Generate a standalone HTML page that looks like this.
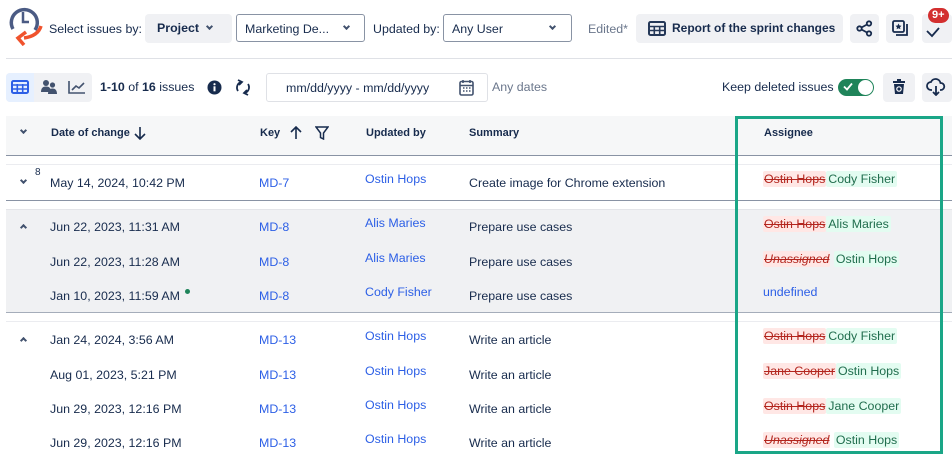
<!DOCTYPE html>
<html><head><meta charset="utf-8"><style>
*{box-sizing:border-box;margin:0;padding:0}
body{width:952px;height:456px;overflow:hidden;background:#fff;font-family:"Liberation Sans",Arial,sans-serif;color:#172b4d;position:relative;font-size:12.4px}
.a{position:absolute;white-space:nowrap}
.btn{position:absolute;background:#f0f1f4;border-radius:4px}
.sel{position:absolute;border:1px solid #8993a4;border-radius:3px;background:#fff;font-size:12.4px;padding:7px 8px}
.chev{position:absolute;width:6px;height:6px;border-right:2px solid #42526e;border-bottom:2px solid #42526e;transform:rotate(45deg)}
.up{transform:rotate(-135deg)}
.th{position:absolute;font-size:11px;font-weight:bold;color:#172b4d;top:127px}
.t{position:absolute;font-size:12.4px;color:#172b4d;white-space:nowrap}
.k{color:#2c5fe6}
.u{color:#2c5fe6}
.del{background:#ffe7e5;color:#b3261e;text-decoration:line-through;padding:1px 1px;border-radius:2px}
.ins{background:#e3fcf1;color:#216e4e;padding:1px 2px;border-radius:2px}
.it{font-style:italic}
</style></head><body>
<svg class="a" style="left:6px;top:6px" width="38" height="40" viewBox="0 0 38 40">
<path d="M7 23 A13 13 0 1 1 29 24" fill="none" stroke="#4b5b84" stroke-width="3.5"/>
<path d="M17 6v10h6" fill="none" stroke="#4b5b84" stroke-width="2.5"/>
<path d="M35 20 Q32 30 18 32" fill="none" stroke="#f0532d" stroke-width="3.5"/>
<path d="M20 26 L12 32 L18 39" fill="none" stroke="#f0532d" stroke-width="3.5"/>
</svg>
<div class="a" style="left:49px;top:22px">Select issues by:</div>
<div class="btn" style="left:145px;top:14px;width:87px;height:29px"></div>
<div class="a" style="left:157px;top:21px;font-weight:bold">Project</div>
<div class="chev" style="left:207px;top:24px;width:5px;height:5px"></div>
<div class="sel" style="left:236px;top:14px;width:129px;height:28px">Marketing De...</div>
<div class="chev" style="left:344px;top:24px;width:5px;height:5px"></div>
<div class="a" style="left:373px;top:22px">Updated by:</div>
<div class="sel" style="left:443px;top:14px;width:129px;height:28px">Any User</div>
<div class="chev" style="left:550px;top:24px;width:5px;height:5px"></div>
<div class="a" style="left:588px;top:22px;color:#6b778c">Edited*</div>
<div class="btn" style="left:636px;top:14px;width:207px;height:29px"></div>
<svg class="a" style="left:648px;top:21px" width="18" height="15" viewBox="0 0 18 15"><rect x="1" y="1" width="16" height="13" rx="1.5" fill="none" stroke="#253858" stroke-width="2"/><path d="M1 5.5h16M1 9.5h16M6.3 5v9M11.7 5v9" stroke="#253858" stroke-width="1.6"/></svg>
<div class="a" style="left:672px;top:21px;font-weight:bold;font-size:12px">Report of the sprint changes</div>
<div class="btn" style="left:850px;top:14px;width:29px;height:29px"></div>
<svg class="a" style="left:856px;top:20px" width="17" height="17" viewBox="0 0 17 17"><circle cx="13" cy="3.5" r="2.2" fill="none" stroke="#172b4d" stroke-width="1.8"/><circle cx="13" cy="13.5" r="2.2" fill="none" stroke="#172b4d" stroke-width="1.8"/><circle cx="3.5" cy="8.5" r="2.2" fill="none" stroke="#172b4d" stroke-width="1.8"/><path d="M5.5 7.5L11 4.5M5.5 9.5L11 12.5" stroke="#172b4d" stroke-width="1.8"/></svg>
<div class="btn" style="left:886px;top:14px;width:28px;height:29px"></div>
<svg class="a" style="left:892px;top:20px" width="17" height="17" viewBox="0 0 17 17"><rect x="1" y="1" width="11" height="11" rx="1.5" fill="none" stroke="#172b4d" stroke-width="1.8"/><path d="M4 15h11V4" fill="none" stroke="#172b4d" stroke-width="1.8"/><path d="M6.5 3.5l1 2 2 .3-1.5 1.4.4 2-1.9-1-1.9 1 .4-2L3.5 5.8l2-.3z" fill="#172b4d"/></svg>
<div class="btn" style="left:922px;top:14px;width:30px;height:29px"></div>
<svg class="a" style="left:926px;top:26px" width="14" height="12" viewBox="0 0 14 12"><path d="M1 5l5 5 7-8" fill="none" stroke="#172b4d" stroke-width="1.8"/></svg>
<div class="a" style="left:928px;top:8px;background:#d32f2f;color:#fff;font-size:11px;font-weight:bold;border-radius:9px;padding:1px 4px;line-height:13px">9+</div>

<div class="a" style="left:6px;top:58px;width:946px;height:1px;background:#dfe1e6"></div>

<div class="btn" style="left:6px;top:73px;width:86px;height:29px"></div>
<div class="a" style="left:6px;top:73px;width:28px;height:29px;background:#e6f0ff;border-radius:4px 0 0 4px"></div>
<svg class="a" style="left:11px;top:80px" width="18" height="14" viewBox="0 0 18 14"><rect x="1" y="1" width="16" height="12" rx="1.5" fill="none" stroke="#2c5fe6" stroke-width="2"/><path d="M1 5h16M1 9h16M6.3 4v9M11.7 4v9" stroke="#2c5fe6" stroke-width="1.6"/></svg>
<svg class="a" style="left:40px;top:79px" width="18" height="16" viewBox="0 0 18 16"><circle cx="6" cy="4" r="3" fill="#42526e"/><circle cx="12.5" cy="6" r="2.6" fill="#42526e"/><path d="M1 13c0-4 2-5.5 5-5.5s5 1.5 5 5.5z" fill="#42526e"/><path d="M8 15c0-4 2-5.5 4.5-5.5S17 11 17 15z" fill="#42526e"/></svg>
<svg class="a" style="left:68px;top:80px" width="18" height="14" viewBox="0 0 18 14"><path d="M1 1v12h16" fill="none" stroke="#42526e" stroke-width="1.6"/><path d="M4 10l4-4 3 2 5-5" fill="none" stroke="#42526e" stroke-width="1.6"/></svg>
<div class="a" style="left:100px;top:80px"><b>1-10</b> of <b>16</b> issues</div>
<svg class="a" style="left:207px;top:80px" width="15" height="15" viewBox="0 0 15 15"><circle cx="7.5" cy="7.5" r="7" fill="#172b4d"/><rect x="6.5" y="6.3" width="2" height="5" fill="#fff"/><circle cx="7.5" cy="4.2" r="1.1" fill="#fff"/></svg>
<svg class="a" style="left:235px;top:79px" width="16" height="17" viewBox="0 0 16 17"><path d="M3 12A6 6 0 0 1 6 3M13 5a6 6 0 0 1-3 9" fill="none" stroke="#172b4d" stroke-width="1.8"/><path d="M3 1l4 2-3 3M13 16l-4-2 3-3" fill="none" stroke="#172b4d" stroke-width="1.8"/></svg>
<div class="sel" style="left:266px;top:73px;width:222px;height:29px;border-color:#dfe1e6;padding-left:19px;padding-top:7px">mm/dd/yyyy - mm/dd/yyyy</div>
<svg class="a" style="left:459px;top:79px" width="15" height="17" viewBox="0 0 15 17"><rect x="1" y="2.5" width="13" height="13.5" rx="1.5" fill="none" stroke="#42526e" stroke-width="1.6"/><path d="M1 6.5h13M4 1v3M11 1v3" stroke="#42526e" stroke-width="1.6"/><path d="M4 9h1.5M7 9h1.5M10 9h1.5M4 12h1.5M7 12h1.5M10 12h1.5" stroke="#42526e" stroke-width="1.4"/></svg>
<div class="a" style="left:492px;top:80px;color:#6b778c">Any dates</div>
<div class="a" style="left:722px;top:80px">Keep deleted issues</div>
<div class="a" style="left:838px;top:79px;width:36px;height:17px;background:#1f845a;border-radius:9px"></div>
<div class="a" style="left:858px;top:80px;width:15px;height:15px;background:#fff;border-radius:50%"></div>
<svg class="a" style="left:843px;top:82px" width="10" height="9" viewBox="0 0 10 9"><path d="M1 4.5l3 3 5-6" fill="none" stroke="#fff" stroke-width="1.8"/></svg>
<div class="btn" style="left:883px;top:73px;width:32px;height:29px"></div>
<svg class="a" style="left:892px;top:79px" width="14" height="16" viewBox="0 0 14 16"><rect x="1" y="2" width="12" height="2" fill="#172b4d"/><rect x="5" y="0" width="4" height="2" fill="#172b4d"/><path d="M2 5h10l-1 10H3z" fill="#172b4d"/><circle cx="7" cy="10" r="2.2" fill="none" stroke="#fff" stroke-width="1.2"/></svg>
<div class="btn" style="left:922px;top:73px;width:30px;height:29px"></div>
<svg class="a" style="left:926px;top:78px" width="20" height="18" viewBox="0 0 20 18"><path d="M6 12H5a4 4 0 0 1 0-8 5 5 0 0 1 9.5 1A3.5 3.5 0 0 1 15 12h-1" fill="none" stroke="#172b4d" stroke-width="1.8"/><path d="M10 8v9M7 14l3 3 3-3" fill="none" stroke="#172b4d" stroke-width="1.8"/></svg>

<div class="a" style="left:6px;top:116px;width:946px;height:40px;background:#f6f7f8;border-bottom:1.5px solid #8993a4"></div>
<div class="chev" style="left:21px;top:128px;width:5px;height:5px"></div>
<div class="th" style="left:51px">Date of change</div>
<svg class="a" style="left:134px;top:126px" width="12" height="14" viewBox="0 0 12 14"><path d="M6 1v12M1 8l5 5 5-5" fill="none" stroke="#172b4d" stroke-width="1.6"/></svg>
<div class="th" style="left:260px">Key</div>
<svg class="a" style="left:290px;top:126px" width="12" height="14" viewBox="0 0 12 14"><path d="M6 13V1M1 6l5-5 5 5" fill="none" stroke="#172b4d" stroke-width="1.6"/></svg>
<svg class="a" style="left:315px;top:126px" width="14" height="14" viewBox="0 0 14 14"><path d="M1 1h12L8.5 7v6l-3-1.5V7z" fill="none" stroke="#172b4d" stroke-width="1.5"/></svg>
<div class="th" style="left:366px">Updated by</div>
<div class="th" style="left:469px">Summary</div>
<div class="th" style="left:764px">Assignee</div>

<div class="a" style="left:6px;top:164px;width:946px;height:37px;background:#fff;border-top:1px solid #ebecf0;border-bottom:1.5px solid #8993a4"></div>
<div class="chev" style="left:21px;top:178px;width:5px;height:5px"></div>
<div class="a" style="left:35px;top:167px;font-size:10px">8</div>
<div class="t" style="left:50px;top:176px">May 14, 2024, 10:42 PM</div>
<div class="t k" style="left:259px;top:176px">MD-7</div>
<div class="t u" style="left:365px;top:172px">Ostin Hops</div>
<div class="t" style="left:469px;top:176px">Create image for Chrome extension</div>
<div class="t" style="left:763px;top:172px"><span class="del">Ostin Hops</span><span class="ins">Cody Fisher</span></div>

<div class="a" style="left:6px;top:209px;width:946px;height:104px;background:#f0f1f3;border-top:1px solid #e4e5e9;border-bottom:1.5px solid #a5adba"></div>
<div class="chev up" style="left:21px;top:225px;width:5px;height:5px"></div>
<div class="t" style="left:50px;top:220px">Jun 22, 2023, 11:31 AM</div>
<div class="t k" style="left:259px;top:220px">MD-8</div>
<div class="t u" style="left:365px;top:216px">Alis Maries</div>
<div class="t" style="left:469px;top:220px">Prepare use cases</div>
<div class="t" style="left:763px;top:217px"><span class="del">Ostin Hops</span><span class="ins">Alis Maries</span></div>
<div class="t" style="left:50px;top:255px">Jun 22, 2023, 11:28 AM</div>
<div class="t k" style="left:259px;top:255px">MD-8</div>
<div class="t u" style="left:365px;top:251px">Alis Maries</div>
<div class="t" style="left:469px;top:255px">Prepare use cases</div>
<div class="t" style="left:763px;top:252px"><span class="del it">Unassigned</span> <span class="ins">Ostin Hops</span></div>
<div class="t" style="left:50px;top:289px">Jan 10, 2023, 11:59 AM</div>
<div class="a" style="left:185px;top:289px;width:5px;height:5px;border-radius:50%;background:#1f845a"></div>
<div class="t k" style="left:259px;top:289px">MD-8</div>
<div class="t u" style="left:365px;top:285px">Cody Fisher</div>
<div class="t" style="left:469px;top:289px">Prepare use cases</div>
<div class="t u" style="left:763px;top:285px">undefined</div>

<div class="a" style="left:6px;top:321px;width:946px;height:140px;background:#fff;border-top:1px solid #ebecf0"></div>
<div class="chev up" style="left:21px;top:338px;width:5px;height:5px"></div>
<div class="t" style="left:50px;top:333px">Jan 24, 2024, 3:56 AM</div>
<div class="t k" style="left:259px;top:333px">MD-13</div>
<div class="t u" style="left:365px;top:329px">Ostin Hops</div>
<div class="t" style="left:469px;top:333px">Write an article</div>
<div class="t" style="left:763px;top:329px"><span class="del">Ostin Hops</span><span class="ins">Cody Fisher</span></div>
<div class="t" style="left:50px;top:368px">Aug 01, 2023, 5:21 PM</div>
<div class="t k" style="left:259px;top:368px">MD-13</div>
<div class="t u" style="left:365px;top:364px">Ostin Hops</div>
<div class="t" style="left:469px;top:368px">Write an article</div>
<div class="t" style="left:763px;top:364px"><span class="del">Jane Cooper</span><span class="ins">Ostin Hops</span></div>
<div class="t" style="left:50px;top:402px">Jun 29, 2023, 12:16 PM</div>
<div class="t k" style="left:259px;top:402px">MD-13</div>
<div class="t u" style="left:365px;top:398px">Ostin Hops</div>
<div class="t" style="left:469px;top:402px">Write an article</div>
<div class="t" style="left:763px;top:399px"><span class="del">Ostin Hops</span><span class="ins">Jane Cooper</span></div>
<div class="t" style="left:50px;top:436px">Jun 29, 2023, 12:16 PM</div>
<div class="t k" style="left:259px;top:436px">MD-13</div>
<div class="t u" style="left:365px;top:432px">Ostin Hops</div>
<div class="t" style="left:469px;top:436px">Write an article</div>
<div class="t" style="left:763px;top:433px"><span class="del it">Unassigned</span> <span class="ins">Ostin Hops</span></div>

<div class="a" style="left:735px;top:116px;width:208px;height:338px;border:3px solid #1aa687"></div>
</body></html>
